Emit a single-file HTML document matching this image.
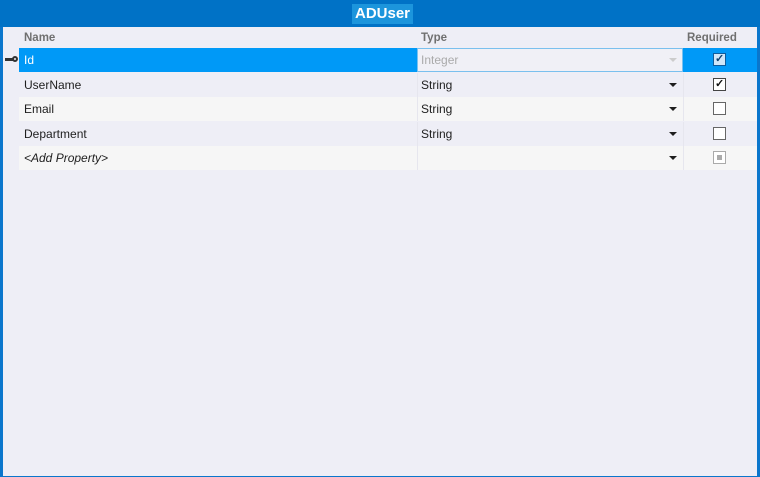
<!DOCTYPE html>
<html><head><style>
*{margin:0;padding:0;box-sizing:border-box}
body{width:760px;height:477px;background:#0a76cc;font-family:"Liberation Sans",sans-serif;font-size:12px;overflow:hidden;position:relative}
.title{position:absolute;left:0;top:0;width:760px;height:27px;background:#0072c6}
.title span{position:absolute;left:352px;top:4px;height:20px;padding:0 3px;background:#1c95dc;color:#fff;font-weight:bold;font-size:15px;line-height:20px}
.body{position:absolute;left:3px;top:27px;width:754px;height:449px;background:#eeeef6}
.row{position:absolute;left:16px;width:738px;height:24px}
.c{position:absolute;top:0;height:24px;line-height:24px;color:#1e1e1e}
.n{left:5px}.t{left:402px}
.hdr{color:#707070;font-weight:bold;font-size:11.5px;line-height:22px}
.sep{position:absolute;top:0;width:1px;height:24px;background:#e6e6ee}
.arr{position:absolute;left:650px;top:10px;width:0;height:0;border-left:4px solid transparent;border-right:4px solid transparent;border-top:4px solid #1e1e1e}
.cb{position:absolute;left:694px;top:5px;width:13px;height:13px;border:1px solid #444;background:#fff}
.ck{position:absolute;left:1px;top:-1px;font-size:11px;line-height:12px;color:#111;font-weight:bold}
</style></head><body>
<div class="title"><span>ADUser</span></div>
<div class="body">
 <div class="row" style="top:0;height:20px"><div class="c hdr n" style="left:5px">Name</div><div class="c hdr" style="left:402px">Type</div><div class="c hdr" style="left:668px">Required</div></div>
 <div class="row" style="top:21px;background:#0099f7">
  <div class="c n" style="color:#fff">Id</div>
  <div style="position:absolute;left:398px;top:0;width:266px;height:24px;border:1px solid #7ac0ee;background:#f0f0f6"></div>
  <div class="c t" style="color:#aaa">Integer</div>
  <div class="arr" style="border-top-color:#ccc"></div>
  <div class="cb" style="border-color:#0e5c9c;background:#cfe6f8"><span class="ck" style="color:#0e3f6c">✓</span></div>
 </div>
 <div class="row" style="top:46px;background:#eeeef6"><div class="c n">UserName</div><div class="sep" style="left:398px"></div><div class="c t">String</div><div class="arr"></div><div class="sep" style="left:664px"></div><div class="cb"><span class="ck">✓</span></div></div>
 <div class="row" style="top:70px;background:#f6f6f6"><div class="c n">Email</div><div class="sep" style="left:398px"></div><div class="c t">String</div><div class="arr"></div><div class="sep" style="left:664px"></div><div class="cb" style="border-color:#666"></div></div>
 <div class="row" style="top:95px;background:#eeeef6"><div class="c n">Department</div><div class="sep" style="left:398px"></div><div class="c t">String</div><div class="arr"></div><div class="sep" style="left:664px"></div><div class="cb" style="border-color:#666"></div></div>
 <div class="row" style="top:119px;background:#f6f6f6"><div class="c n" style="font-style:italic">&lt;Add Property&gt;</div><div class="sep" style="left:398px"></div><div class="arr"></div><div class="sep" style="left:664px"></div><div class="cb" style="border-color:#aaa"><div style="position:absolute;left:3px;top:3px;width:5px;height:5px;background:#aaa"></div></div></div>
 <div style="position:absolute;left:2px;top:31px;width:8px;height:3px;background:#333"></div>
 <div style="position:absolute;left:9px;top:29px;width:6px;height:6px;border:2px solid #333;border-radius:50%"></div>
</div>
</body></html>
